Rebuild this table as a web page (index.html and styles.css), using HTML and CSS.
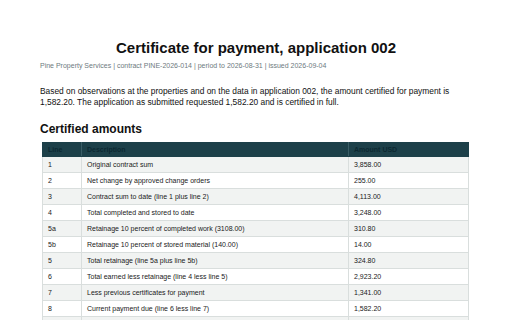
FILE: index.html
```html
<!DOCTYPE html>
<html>
<head>
<meta charset="utf-8">
<link rel="stylesheet" href="styles.css">
</head>
<body>
<div class="page">
  <h1 class="title">Certificate for payment, application 002</h1>
  <p class="meta">Pine Property Services | contract PINE-2026-014 | period to 2026-08-31 | issued 2026-09-04</p>
  <p class="summary">Based on observations at the properties and on the data in application 002, the amount certified for payment is 1,582.20. The application as submitted requested 1,582.20 and is certified in full.</p>
  <h2 class="section">Certified amounts</h2>
  <table class="amounts">
    <thead>
      <tr><th class="c-line">Line</th><th class="c-desc">Description</th><th class="c-amt">Amount USD</th></tr>
    </thead>
    <tbody>
      <tr><td>1</td><td>Original contract sum</td><td>3,858.00</td></tr>
      <tr><td>2</td><td>Net change by approved change orders</td><td>255.00</td></tr>
      <tr><td>3</td><td>Contract sum to date (line 1 plus line 2)</td><td>4,113.00</td></tr>
      <tr><td>4</td><td>Total completed and stored to date</td><td>3,248.00</td></tr>
      <tr><td>5a</td><td>Retainage 10 percent of completed work (3108.00)</td><td>310.80</td></tr>
      <tr><td>5b</td><td>Retainage 10 percent of stored material (140.00)</td><td>14.00</td></tr>
      <tr><td>5</td><td>Total retainage (line 5a plus line 5b)</td><td>324.80</td></tr>
      <tr><td>6</td><td>Total earned less retainage (line 4 less line 5)</td><td>2,923.20</td></tr>
      <tr><td>7</td><td>Less previous certificates for payment</td><td>1,341.00</td></tr>
      <tr><td>8</td><td>Current payment due (line 6 less line 7)</td><td>1,582.20</td></tr>
      <tr class="blank"><td></td><td></td><td></td></tr>
    </tbody>
  </table>
</div>
</body>
</html>
```

FILE: styles.css
```css
html, body {
  margin: 0;
  padding: 0;
  background: #ffffff;
}
body {
  font-family: "Liberation Sans", Arial, sans-serif;
  color: #111111;
}
.page {
  padding: 39px 40px 0 40px;
}
.title {
  margin: 0;
  font-size: 15px;
  line-height: 18px;
  font-weight: bold;
  text-align: center;
  color: #111111;
}
.meta {
  margin: 4px 0 0 0;
  font-size: 7px;
  line-height: 9px;
  color: #6e7a80;
}
.summary {
  margin: 16px 0 0 0;
  font-size: 8.4px;
  line-height: 11px;
  color: #111111;
}
.section {
  margin: 14px 0 0 0;
  font-size: 12px;
  line-height: 14px;
  font-weight: bold;
}
.amounts {
  margin: 6px 0 0 2px;
  width: 427px;
  border-collapse: collapse;
  font-size: 7px;
}
.amounts th {
  background: #1d4049;
  color: #0c2831;
  font-weight: bold;
  text-align: left;
  height: 13px;
  padding: 0 5px;
  border: 1px solid #1d4049;
  border-right-color: #3a5d66;
}
.amounts th:last-child {
  border-right-color: #1d4049;
}
.c-line { width: 28px; }
.c-amt { width: 109px; }
.amounts td {
  height: 15px;
  padding: 0 5px;
  border: 1px solid #d9dedd;
  color: #1a1a1a;
}
.amounts tbody tr:nth-child(odd) td {
  background: #f1f3f2;
}
```
